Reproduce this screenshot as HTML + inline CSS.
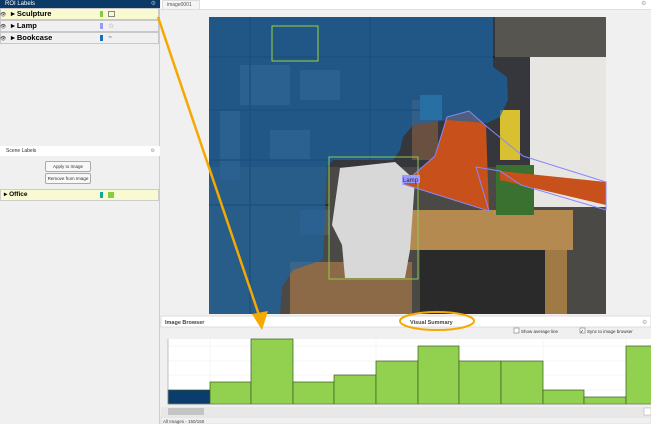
<!DOCTYPE html>
<html><head><meta charset="utf-8"><style>
*{margin:0;padding:0;box-sizing:border-box}
body{width:651px;height:424px;overflow:hidden;background:#f0f0f0;font-family:"Liberation Sans",sans-serif;position:relative}
.a{position:absolute}
.row{position:absolute;left:0;width:159px;height:12px;border:1px solid #c8c8c8;background:#f0f0f0;font-size:7.5px;font-weight:bold;line-height:10px}
.btn{position:absolute;left:45px;width:46px;height:11px;border:1px solid #aaa;border-radius:2px;background:#f8f8f8;font-size:4.5px;text-align:center;line-height:9px;color:#333}
</style></head><body>
<div class="a" style="left:0;top:0;width:160px;height:424px;background:#f0f0f0;border-right:1px solid #ccc"></div>
<div class="a" style="left:0;top:0;width:160px;height:8px;background:#0b3a66;color:#fff;font-size:6px;line-height:8px;padding-left:5px">ROI Labels<span style="position:absolute;right:4px;color:#9ab">⚙</span></div>
<div class="row" style="top:8px;background:#fafad2"><span style="margin-left:10px">▸ Sculpture</span><span class="a" style="left:99px;top:2px;width:3px;height:6px;background:#8c4"></span><span class="a" style="left:107px;top:2px;width:7px;height:6px;border:1px solid #888"></span></div>
<div class="row" style="top:20px"><span style="margin-left:10px">▸ Lamp</span><span class="a" style="left:99px;top:2px;width:3px;height:6px;background:#99f"></span><span class="a" style="left:107px;top:1px;font-size:7px;color:#888;font-weight:normal">☆</span></div>
<div class="row" style="top:32px"><span style="margin-left:10px">▸ Bookcase</span><span class="a" style="left:99px;top:2px;width:3px;height:6px;background:#1a6fc0"></span><span class="a" style="left:107px;top:0;font-size:7px;color:#888;font-weight:normal">⌁</span></div>
<div class="a" style="left:0;top:9px;width:6px;height:32px;font-size:5px;line-height:12px;color:#333">👁<br>👁<br>👁</div>
<div class="a" style="left:0;top:146px;width:160px;height:10px;background:#fff;font-size:5px;line-height:10px;padding-left:6px;color:#333">Scene Labels<span style="position:absolute;right:5px;color:#999">⚙</span></div>
<div class="btn" style="top:161px">Apply to Image</div>
<div class="btn" style="top:173px">Remove from Image</div>
<div class="a" style="left:0;top:189px;width:159px;height:12px;background:#fafad2;border:1px solid #ccc;font-size:6.5px;font-weight:bold;line-height:10px;padding-left:3px">▸ Office<span class="a" style="left:99px;top:2px;width:3px;height:6px;background:#1a9"></span><span class="a" style="left:107px;top:2px;width:6px;height:6px;background:#8c4"></span></div>
<div class="a" style="left:161px;top:0;width:490px;height:10px;background:#fff;border-bottom:1px solid #ddd"></div>
<div class="a" style="left:162px;top:0;width:38px;height:10px;background:#f5f5f5;border:1px solid #ddd;font-size:5px;color:#555;line-height:9px;padding-left:4px">image0001</div>
<div class="a" style="left:641px;top:0;font-size:6px;color:#aaa">⚙</div>
<svg class="a" style="left:0;top:0" width="651" height="424">
<rect x="209" y="17" width="397" height="297" fill="#4a4946"/>
<rect x="209" y="17" width="397" height="150" fill="#35373c"/>
<rect x="495" y="17" width="111" height="40" fill="#57554f"/>
<rect x="530" y="57" width="76" height="150" fill="#e8e6e2"/>
<rect x="398" y="210" width="175" height="40" fill="#b58a50"/>
<rect x="545" y="250" width="22" height="64" fill="#a07a45"/>
<rect x="290" y="262" width="122" height="52" fill="#8c6a48"/>
<rect x="420" y="250" width="125" height="64" fill="#2a2a2a"/>
<rect x="412" y="100" width="26" height="60" fill="#6a5040"/>
<rect x="420" y="95" width="22" height="25" fill="#4c8aa0"/>
<rect x="500" y="110" width="20" height="50" fill="#d8c030"/>
<rect x="496" y="165" width="38" height="50" fill="#3a7030"/>
<g fill="#55595f"><rect x="240" y="65" width="50" height="40"/><rect x="300" y="70" width="40" height="30"/><rect x="270" y="130" width="40" height="30"/><rect x="300" y="210" width="30" height="25"/><rect x="220" y="110" width="20" height="70"/></g>
<g stroke="#222" stroke-width="1.5"><line x1="209" y1="57" x2="495" y2="57"/><line x1="209" y1="110" x2="420" y2="110"/><line x1="209" y1="160" x2="330" y2="160"/><line x1="209" y1="205" x2="330" y2="205"/><line x1="250" y1="17" x2="250" y2="314"/><line x1="370" y1="17" x2="370" y2="160"/></g>
<path d="M340 168 L395 162 L415 180 L410 250 L405 278 L345 278 L342 245 L332 225 Z" fill="#d8d8d8"/>
<path d="M403 184 L435 156 L447 117 L469 111 L486 126 L489 211 Z" fill="#c8501a"/>
<path d="M500 171 L606 182 L606 205 L500 180 Z" fill="#c8501a"/>
<path d="M209 17 L493 17 L493 67 L507 77 L508 100 L500 117 L487 123 L447 120 L413 125 L403 137 L400 150 L393 160 L333 160 L327 167 L323 260 L293 270 L282 287 L280 314 L209 314 Z" fill="#1a65a5" opacity="0.7"/>
<rect x="272" y="26" width="46" height="35" fill="none" stroke="#a0d040" stroke-width="1"/>
<rect x="329" y="157" width="89" height="122" fill="none" stroke="#90c850" stroke-width="1"/>
<path d="M403 184 L435 156 L447 117 L469 111 L486 126 L523 156 L606 182 L606 210 L521 185 L500 171 L476 167 L489 211 Z" fill="none" stroke="#8888ff" stroke-width="1"/>
<rect x="402" y="175" width="18" height="8" fill="#9a9aff"/>
<text x="403" y="182" font-size="6" fill="#222" font-family="Liberation Sans">Lamp</text>
<rect x="161" y="314" width="490" height="110" fill="#f0f0f0"/>
<rect x="161" y="316" width="490" height="11" fill="#fff" stroke="#ddd"/>
<text x="165" y="324" font-size="5.5" font-weight="bold" fill="#444" font-family="Liberation Sans">Image Browser</text>
<text x="410" y="324" font-size="5.5" font-weight="bold" fill="#444" font-family="Liberation Sans">Visual Summary</text>
<text x="642" y="324" font-size="6" fill="#aaa">⚙</text>
<rect x="514" y="328" width="5" height="5" fill="#fff" stroke="#777" stroke-width="0.6"/>
<text x="521" y="333" font-size="4.5" fill="#333" font-family="Liberation Sans">Show average line</text>
<rect x="580" y="328" width="5" height="5" fill="#fff" stroke="#777" stroke-width="0.6"/>
<text x="580" y="333" font-size="5" fill="#000">✓</text>
<text x="587" y="333" font-size="4.5" fill="#333" font-family="Liberation Sans">Sync to image browser</text>
<rect x="168" y="339" width="483" height="65" fill="#fff"/>
<g stroke="#eee" stroke-width="0.6"><line x1="168" y1="346" x2="651" y2="346"/><line x1="168" y1="361" x2="651" y2="361"/><line x1="168" y1="375" x2="651" y2="375"/><line x1="168" y1="390" x2="651" y2="390"/><line x1="210" y1="339" x2="210" y2="404"/><line x1="293" y1="339" x2="293" y2="404"/><line x1="376" y1="339" x2="376" y2="404"/><line x1="459" y1="339" x2="459" y2="404"/><line x1="543" y1="339" x2="543" y2="404"/><line x1="626" y1="339" x2="626" y2="404"/></g>
<g stroke="#3a5a20" stroke-width="0.7" fill="#92d050">
<rect x="168" y="390" width="42" height="14" fill="#0a3d6b"/>
<rect x="210" y="382" width="41" height="22"/><rect x="251" y="339" width="42" height="65"/>
<rect x="293" y="382" width="41" height="22"/><rect x="334" y="375" width="42" height="29"/>
<rect x="376" y="361" width="42" height="43"/><rect x="418" y="346" width="41" height="58"/>
<rect x="459" y="361" width="42" height="43"/><rect x="501" y="361" width="42" height="43"/>
<rect x="543" y="390" width="41" height="14"/><rect x="584" y="397" width="42" height="7"/>
<rect x="626" y="346" width="30" height="58"/></g>
<line x1="168" y1="339" x2="168" y2="404" stroke="#999" stroke-width="0.6"/>
<line x1="168" y1="404" x2="651" y2="404" stroke="#999" stroke-width="0.6"/>
<rect x="161" y="407" width="490" height="9" fill="#e8e8e8"/>
<rect x="168" y="408" width="36" height="7" fill="#c4c4c4"/>
<rect x="644" y="408" width="7" height="7" fill="#fff" stroke="#aaa" stroke-width="0.5"/>
<rect x="161" y="417" width="490" height="7" fill="#f0f0f0" stroke="#ccc" stroke-width="0.5"/>
<text x="163" y="423" font-size="4.5" fill="#444" font-family="Liberation Sans">All Images - 150/150</text>
<line x1="158" y1="17" x2="260" y2="318" stroke="#f5a800" stroke-width="2.5"/>
<path d="M252 314 L262 330 L268 311 Z" fill="#f5a800"/>
<ellipse cx="437" cy="321" rx="37" ry="9" fill="none" stroke="#f5a800" stroke-width="2"/>
</svg>
</body></html>
